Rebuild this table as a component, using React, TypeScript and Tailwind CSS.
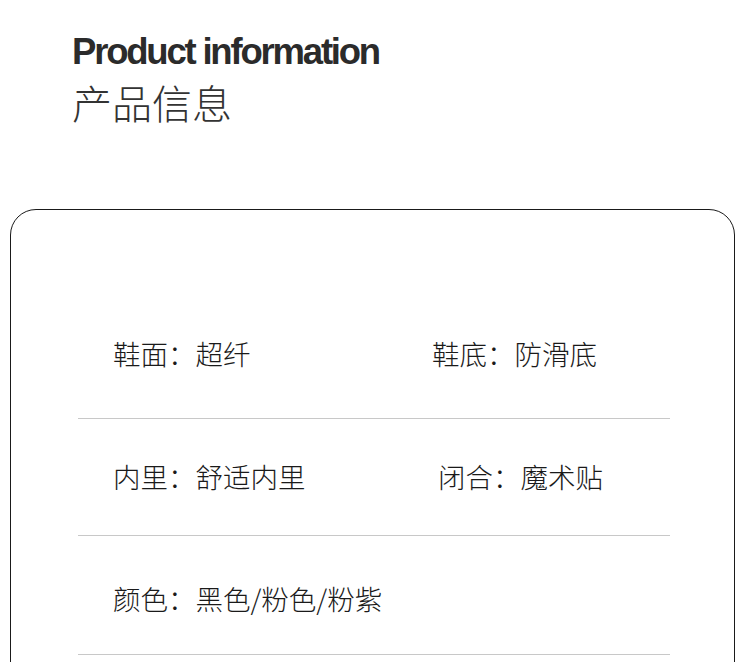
const ROWS = [
  { left: "鞋面：超纤", right: "鞋底：防滑底", h: "h-[130px]", rightPad: "" },
  { left: "内里：舒适内里", right: "闭合：魔术贴", h: "h-[117px]", rightPad: "pl-[6px]" },
  { left: "颜色：黑色/粉色/粉紫", right: "", h: "h-[119px] pt-2", rightPad: "" },
];

const CJK = "font-['Noto_Sans_CJK_SC','Noto_Sans',sans-serif]";

const App = () => {
  return (
    <div className="w-[750px] h-[662px] overflow-hidden bg-white">
      {/* header */}
      <div className="pl-[72px] pt-[30px]">
        <h1 className="font-['Liberation_Sans',sans-serif] font-bold text-[36.5px] leading-[44px] text-[#2b2b2b] tracking-[-2.2px]">
          Product information
        </h1>
        <h2 className={CJK + " font-light text-[40px] leading-[52px] text-[#333] mt-[2px]"}>产品信息</h2>
      </div>

      {/* card */}
      <div className="mt-[81px] ml-[10px] mr-[15px] h-[600px] border border-[#1a1a1a] rounded-[26px] pt-[79px]">
        {ROWS.map((row) => (
          <div key={row.left} className={"mx-[67px] mr-[64px] border-b border-[#c8c8c8] flex items-center " + row.h}>
            <div className={CJK + " grid grid-cols-[319px_1fr] w-full pl-[35px] text-[27.5px] font-light text-[#1a1a1a]"}>
              <span>{row.left}</span>
              <span className={row.rightPad}>{row.right}</span>
            </div>
          </div>
        ))}
      </div>
    </div>
  );
};

export default App;
